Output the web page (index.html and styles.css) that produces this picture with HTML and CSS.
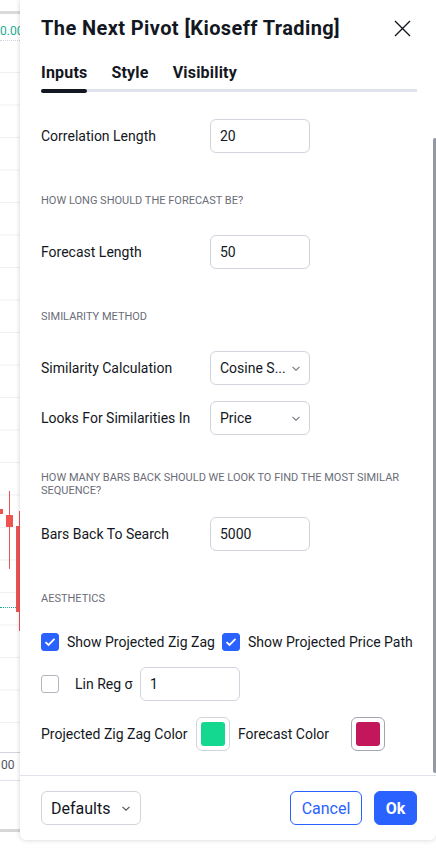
FILE: index.html
```html
<!DOCTYPE html>
<html>
<head>
    <meta charset="utf-8">
    <link rel="stylesheet" href="styles.css">
</head>
<body>
<div class="screen">
    <div class="chart">
        <div class="chart-top"></div>
        <div class="price-tag">0.00</div>
        <div class="grid">
            <div class="candle c1"></div>
            <div class="wick w2"></div>
            <div class="candle c2"></div>
            <div class="wick w3"></div>
            <div class="candle c3"></div>
            <div class="last-price"></div>
        </div>
        <div class="time-axis">00</div>
        <div class="chart-scroll"></div>
    </div>

    <div class="dialog">
        <div class="dialog-header">
            <h1 class="title">The Next Pivot [Kioseff Trading]</h1>
            <button class="close">
                <svg width="17" height="17" viewBox="0 0 17 17"><path d="M1 1l15 15M16 1L1 16" stroke="#131722" stroke-width="1.4" fill="none"/></svg>
            </button>
        </div>

        <div class="tabs">
            <div class="tab active">Inputs</div>
            <div class="tab">Style</div>
            <div class="tab">Visibility</div>
        </div>

        <div class="dialog-body">
            <div class="content">
                <div class="row">
                    <div class="label">Correlation Length</div>
                    <div class="field">20</div>
                </div>

                <div class="section">How long should the forecast be?</div>
                <div class="row">
                    <div class="label">Forecast Length</div>
                    <div class="field">50</div>
                </div>

                <div class="section">Similarity Method</div>
                <div class="row">
                    <div class="label">Similarity Calculation</div>
                    <div class="field select">
                        <span>Cosine S...</span>
                        <svg width="8" height="5" viewBox="0 0 8 5"><path d="M0.5 0.8l3.5 3.4 3.5-3.4" stroke="#787b86" stroke-width="1.1" fill="none"/></svg>
                    </div>
                </div>
                <div class="row">
                    <div class="label">Looks For Similarities In</div>
                    <div class="field select">
                        <span>Price</span>
                        <svg width="8" height="5" viewBox="0 0 8 5"><path d="M0.5 0.8l3.5 3.4 3.5-3.4" stroke="#787b86" stroke-width="1.1" fill="none"/></svg>
                    </div>
                </div>

                <div class="section wrap">How many bars back should we look to find the most similar sequence?</div>
                <div class="row">
                    <div class="label">Bars Back To Search</div>
                    <div class="field">5000</div>
                </div>

                <div class="section">Aesthetics</div>
                <div class="row checks">
                    <div class="check-item first">
                        <span class="checkbox checked">
                            <svg width="12" height="10" viewBox="0 0 12 10"><path d="M1.5 5.2l3 2.8 6-6.2" stroke="#fff" stroke-width="1.8" fill="none"/></svg>
                        </span>
                        <span class="check-label">Show Projected Zig Zag</span>
                    </div>
                    <div class="check-item">
                        <span class="checkbox checked">
                            <svg width="12" height="10" viewBox="0 0 12 10"><path d="M1.5 5.2l3 2.8 6-6.2" stroke="#fff" stroke-width="1.8" fill="none"/></svg>
                        </span>
                        <span class="check-label">Show Projected Price Path</span>
                    </div>
                </div>
                <div class="row">
                    <span class="checkbox"></span>
                    <span class="lin-label">Lin Reg σ</span>
                    <div class="field">1</div>
                </div>
                <div class="row">
                    <div class="color-label">Projected Zig Zag Color</div>
                    <div class="swatch"><span class="swatch-fill green"></span></div>
                    <div class="color-label second">Forecast Color</div>
                    <div class="swatch dark"><span class="swatch-fill crimson"></span></div>
                </div>
            </div>
            <div class="scrollbar"><div class="thumb"></div></div>
        </div>

        <div class="footer">
            <div class="field select defaults">
                <span>Defaults</span>
                <svg width="8" height="5" viewBox="0 0 8 5"><path d="M0.5 0.8l3.5 3.4 3.5-3.4" stroke="#50535e" stroke-width="1.1" fill="none"/></svg>
            </div>
            <div class="spacer"></div>
            <button class="btn btn-outline">Cancel</button>
            <button class="btn btn-primary">Ok</button>
        </div>
    </div>
</div>
</body>
</html>
```

FILE: styles.css
```css
* {
    box-sizing: border-box;
}

body {
    margin: 0;
    background: #fff;
    font-family: Roboto, "Liberation Sans", sans-serif;
    color: #131722;
}

.screen {
    display: flex;
    align-items: flex-start;
    width: 436px;
    height: 856px;
    overflow: hidden;
}

/* chart strip behind the dialog */
.chart {
    width: 20px;
    height: 856px;
    flex-shrink: 0;
    display: flex;
    flex-direction: column;
    overflow: hidden;
}

.chart-top {
    margin-top: 11px;
    height: 3px;
    background: #dadada;
}

.price-tag {
    height: 27px;
    padding-top: 10px;
    font-size: 12px;
    line-height: 14px;
    color: #22ab94;
    white-space: nowrap;
    border-bottom: 1px dotted #d1d4dc;
}

.grid {
    position: relative;
    height: 712px;
    border-bottom: 1px solid #d1d4dc;
    background-image: linear-gradient(#eef0f4 1px, transparent 1px);
    background-size: 100% 32.5px;
    background-position: 0 31px;
}

.candle, .wick {
    position: absolute;
    background: #ef5350;
}

.c1 { left: 0; top: 468px; width: 3px; height: 5px; }
.w2 { left: 9px; top: 450px; width: 1px; height: 78px; }
.c2 { left: 6px; top: 474px; width: 7px; height: 12px; }
.w3 { left: 19px; top: 470px; width: 1px; height: 120px; }
.c3 { left: 16px; top: 485px; width: 5px; height: 86px; }

.last-price {
    position: absolute;
    left: 0;
    top: 566px;
    width: 16px;
    border-top: 1px dotted #22ab94;
}

.time-axis {
    height: 28px;
    padding: 5px 0 0 1px;
    font-size: 12px;
    line-height: 14px;
    color: #50535e;
    border-bottom: 1px solid #e0e3eb;
}

.chart-scroll {
    margin-top: 48px;
    height: 3px;
    background: #d6d6d6;
}

/* dialog */
.dialog {
    position: relative;
    z-index: 1;
    width: 416px;
    height: 840px;
    flex-shrink: 0;
    background: #fff;
    border-radius: 0 0 6px 6px;
    box-shadow: 0 0 5px rgba(0, 0, 0, 0.18);
    display: flex;
    flex-direction: column;
}

.dialog-header {
    height: 56px;
    padding: 0 25px 0 21px;
    display: flex;
    align-items: center;
    justify-content: space-between;
}

.title {
    margin: 0;
    font-size: 20px;
    font-weight: 700;
    letter-spacing: 0.4px;
    color: #131722;
}

.close {
    width: 17px;
    height: 17px;
    padding: 0;
    border: 0;
    background: none;
    display: flex;
}

.tabs {
    height: 36px;
    margin: 0 19px 0 21px;
    padding-top: 7px;
    display: flex;
    gap: 24px;
    border-bottom: 3px solid #e0e3eb;
}

.tab {
    position: relative;
    font-size: 16px;
    font-weight: 700;
    line-height: 20px;
    letter-spacing: 0.2px;
    color: #131722;
}

.tab.active::after {
    content: "";
    position: absolute;
    left: 0;
    right: 0;
    top: 26px;
    height: 4px;
    border-radius: 2px;
    background: #131722;
}

.dialog-body {
    flex: 1;
    min-height: 0;
    display: flex;
}

.content {
    flex: 1;
    padding: 27px 20px 0 21px;
    display: flex;
    flex-direction: column;
}

.scrollbar {
    width: 4px;
}

.thumb {
    margin-top: 46px;
    height: 635px;
    width: 4px;
    border-radius: 2px;
    background: #9598a1;
}

.row {
    height: 34px;
    margin-bottom: 16px;
    display: flex;
    align-items: center;
    flex-shrink: 0;
}

.row.checks {
    height: 18px;
}

.label {
    width: 169px;
    font-size: 14px;
}

.field {
    width: 100px;
    height: 34px;
    padding: 0 9px;
    border: 1px solid #d1d4dc;
    border-radius: 6px;
    font-size: 14px;
    color: #131722;
    display: flex;
    align-items: center;
}

.field.select {
    justify-content: space-between;
}

.section {
    margin: 24px 0 26px;
    font-size: 11px;
    line-height: 16px;
    color: #6a6d78;
    text-transform: uppercase;
}

.section.wrap {
    margin: 20px 0 20px;
    line-height: 13px;
}

.check-item {
    display: flex;
    align-items: center;
}

.check-item.first {
    width: 181px;
}

.checkbox {
    width: 18px;
    height: 18px;
    flex-shrink: 0;
    border: 1px solid #b2b5be;
    border-radius: 3px;
    display: flex;
    align-items: center;
    justify-content: center;
}

.checkbox.checked {
    background: #2962ff;
    border-color: #2962ff;
}

.check-label {
    margin-left: 8px;
    font-size: 14px;
    white-space: nowrap;
}

.lin-label {
    width: 65px;
    margin-left: 16px;
    font-size: 14px;
}

.color-label {
    width: 155px;
    font-size: 14px;
}

.color-label.second {
    width: 113px;
    margin-left: 8px;
}

.swatch {
    width: 34px;
    height: 34px;
    padding: 4px;
    border: 1px solid #d1d4dc;
    border-radius: 6px;
}

.swatch.dark {
    border-color: #a3a6af;
}

.swatch-fill {
    display: block;
    width: 24px;
    height: 24px;
    border-radius: 3px;
}

.green {
    background: #14d88f;
}

.crimson {
    background: #c2185b;
}

.footer {
    height: 65px;
    padding: 0 19px 0 21px;
    border-top: 1px solid #e0e3eb;
    display: flex;
    align-items: center;
    gap: 12px;
}

.defaults {
    font-size: 16px;
    padding-right: 10px;
}

.spacer {
    flex: 1;
}

.btn {
    height: 34px;
    border-radius: 6px;
    font-family: inherit;
    font-size: 16px;
    border: 1px solid #2962ff;
    padding: 0;
}

.btn-outline {
    width: 72px;
    background: #fff;
    color: #2962ff;
}

.btn-primary {
    width: 43px;
    background: #2962ff;
    color: #fff;
    font-weight: 700;
}
```
